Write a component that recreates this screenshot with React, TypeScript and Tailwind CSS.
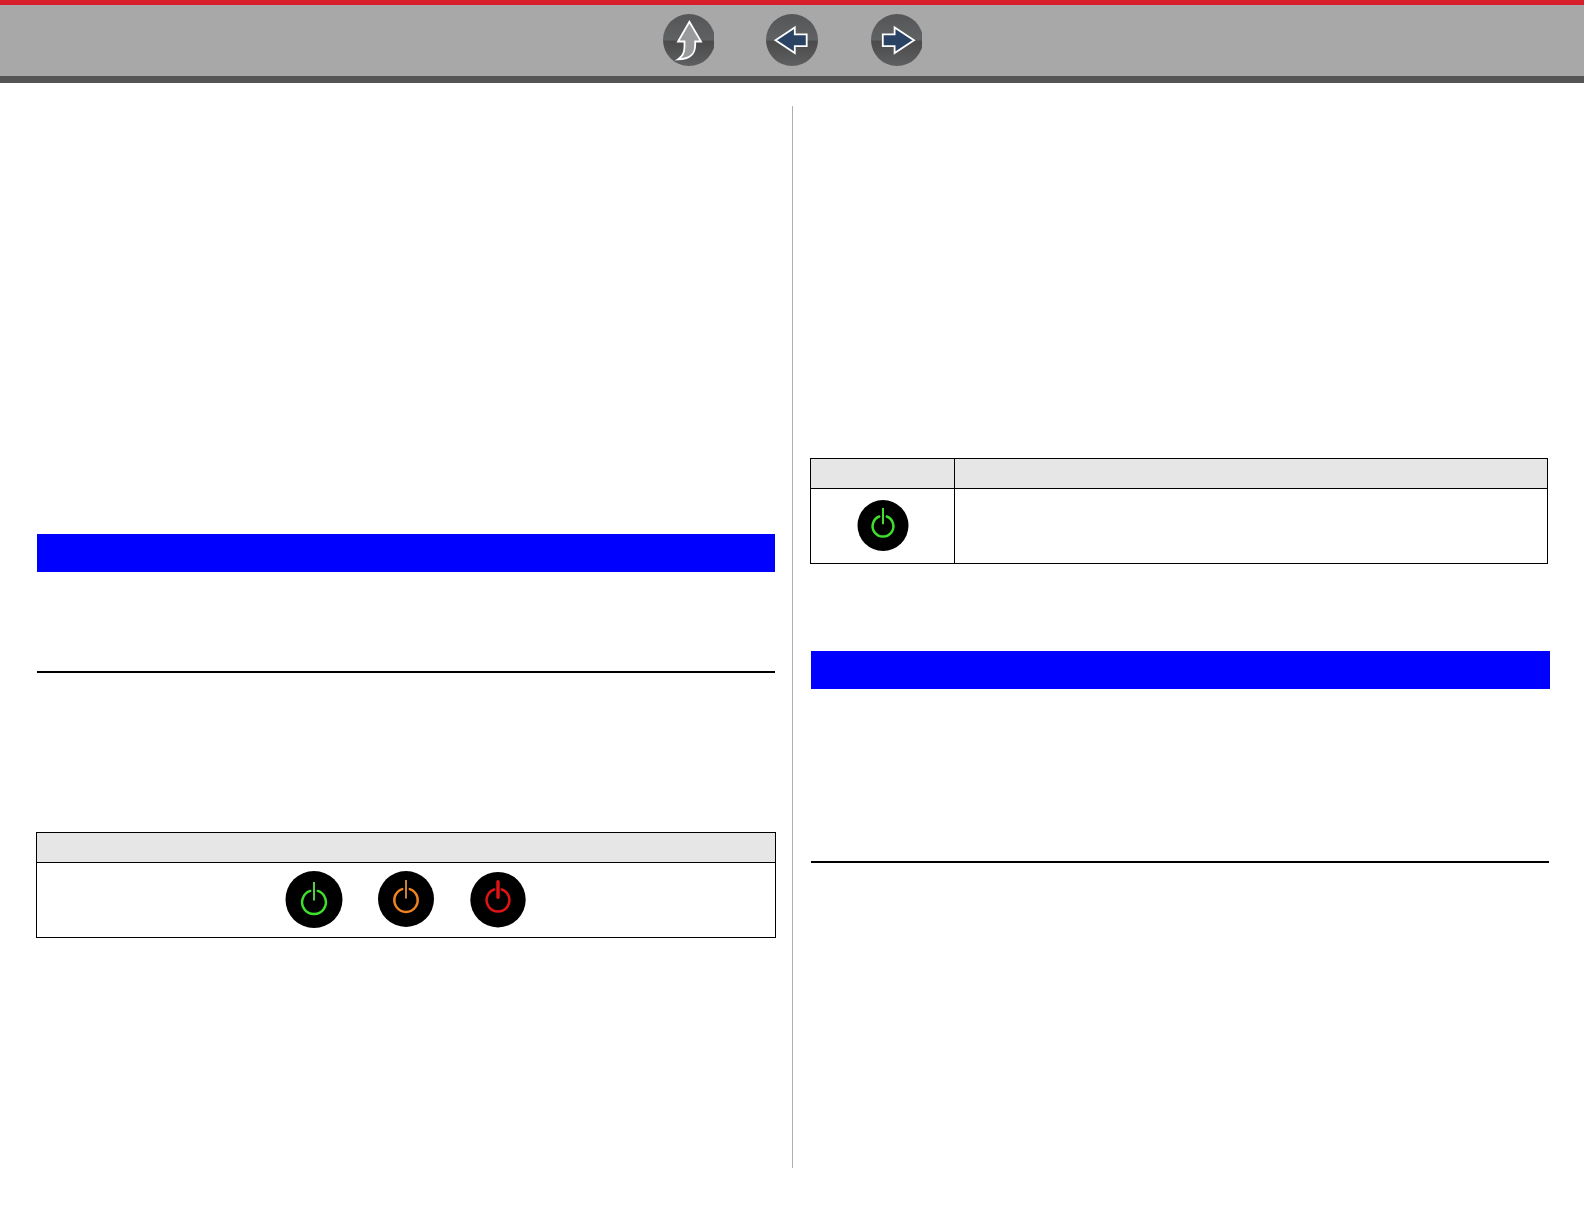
import React from 'react';

interface PowerIconProps {
  box: number;
  r: number;
  color: string;
  stemColor: string;
  ringY: number;
  radius: number;
  stemTop: number;
  stemBottom: number;
  stemWidth: number;
}

const PowerIcon: React.FC<PowerIconProps> = ({
  box,
  r,
  color,
  stemColor,
  ringY,
  radius,
  stemTop,
  stemBottom,
  stemWidth,
}) => {
  const c = box / 2;
  // the ring stays open around the stem
  const gap = 3.8;
  const dy = Math.sqrt(radius * radius - gap * gap);

  return (
    <svg width={box} height={box} viewBox={`0 0 ${box} ${box}`} className="block shrink-0" fill="none">
      <circle cx={c} cy={r} r={r} fill="#000" />
      <path
        d={`M${c + gap} ${ringY - dy} A${radius} ${radius} 0 1 1 ${c - gap} ${ringY - dy}`}
        stroke={color}
        strokeWidth="2.5"
        strokeLinecap="round"
      />
      <path d={`M${c} ${stemTop}V${stemBottom}`} stroke={stemColor} strokeWidth={stemWidth} strokeLinecap={stemWidth > 3 ? 'round' : 'butt'} />
    </svg>
  );
};

const navItems = [
  {
    label: 'Up',
    width: 51,
    fill: '#999a9b',
    d: 'M26.4 7.8L38 27.5H32.2V31C32.2 40.3 27.5 45 14.9 45.4C19.5 42.5 21.5 39.5 21.5 33V27.5H15Z',
  },
  { label: 'Previous', width: 53, fill: '#2a4365', d: 'M9.5 26.2L28.8 13.5V20.3H40.7V32.2H28.8V39Z' },
  { label: 'Next', width: 51, fill: '#2a4365', d: 'M43 26.2L23.6 13.5V20.3H11.8V32.2H23.6V39Z' },
];

const Header: React.FC = () => (
  <header className="h-[83px] border-t-[5px] border-b-[7px] border-t-[#d71f2b] border-b-[#555555] bg-[#a8a8a8]">
    <nav className="flex items-start gap-[52px] pt-[9px] pl-[663px]">
      {navItems.map((item) => (
        <button key={item.label} aria-label={item.label} className="block">
          <svg width={item.width} height="52" viewBox={`0 0 ${item.width} 52`} className="block" fill="none">
            <defs>
              <linearGradient id={`shade-${item.label}`} x1="0" y1="0" x2="0" y2="1">
                <stop offset="0" stopColor="#555657" />
                <stop offset="0.5" stopColor="#606162" />
                <stop offset="0.52" stopColor="#4b4b4c" />
                <stop offset="1" stopColor="#5e5f60" />
              </linearGradient>
            </defs>
            <circle cx="26" cy="26" r="26" fill={`url(#shade-${item.label})`} />
            <path d={item.d} fill={item.fill} stroke="#fff" strokeWidth="1.8" />
          </svg>
        </button>
      ))}
    </nav>
  </header>
);

const App: React.FC = () => {
  return (
    <div className="h-[1224px] w-[1584px] overflow-hidden bg-white">
      <Header />

      <main className="flex pt-[23px]">
        {/* Left column */}
        <section className="h-[1062px] w-[792px] pl-9">
          <div className="mt-[428px] ml-px h-[38px] w-[738px] bg-[#0000ff]" />
          <div className="mt-[99px] ml-px h-0.5 w-[738px] bg-black" />

          <div className="mt-[159px] h-[106px] w-[740px] border border-black">
            <div className="h-[30px] border-b border-black bg-[#e6e6e6]" />
            <div className="flex pt-2 pl-[248px]">
              <PowerIcon box={58} r={28.5} color="#3fe02c" stemColor="#5bc94c" ringY={31.2} radius={11.9} stemTop={11} stemBottom={29.5} stemWidth={2} />
              <div className="ml-[35px]">
                <PowerIcon box={56} r={28} color="#ee8322" stemColor="#c9813c" ringY={29.2} radius={11.7} stemTop={9} stemBottom={27.5} stemWidth={2} />
              </div>
              <div className="mt-px ml-[36px]">
                <PowerIcon box={56} r={27.7} color="#e01414" stemColor="#e01414" ringY={28.2} radius={11.4} stemTop={9.8} stemBottom={25.2} stemWidth={3.4} />
              </div>
            </div>
          </div>
        </section>

        <div className="h-[1062px] w-px bg-[#b0b0b0]" />

        {/* Right column */}
        <section className="h-[1062px] flex-1 pl-[17px]">
          <div className="mt-[352px] h-[106px] w-[738px] border border-black">
            <div className="flex h-[30px] border-b border-black bg-[#e6e6e6]">
              <div className="w-36 border-r border-black" />
            </div>
            <div className="flex h-[74px]">
              <div className="w-36 border-r border-black pt-[11px] pl-[46px]">
                <PowerIcon box={52} r={25.5} color="#3fe02c" stemColor="#3fe02c" ringY={26.2} radius={10.4} stemTop={8} stemBottom={24.3} stemWidth={2} />
              </div>
            </div>
          </div>

          <div className="mt-[87px] ml-px h-[38px] w-[739px] bg-[#0000ff]" />
          <div className="mt-[172px] ml-px h-0.5 w-[738px] bg-black" />
        </section>
      </main>
    </div>
  );
};

export default App;
